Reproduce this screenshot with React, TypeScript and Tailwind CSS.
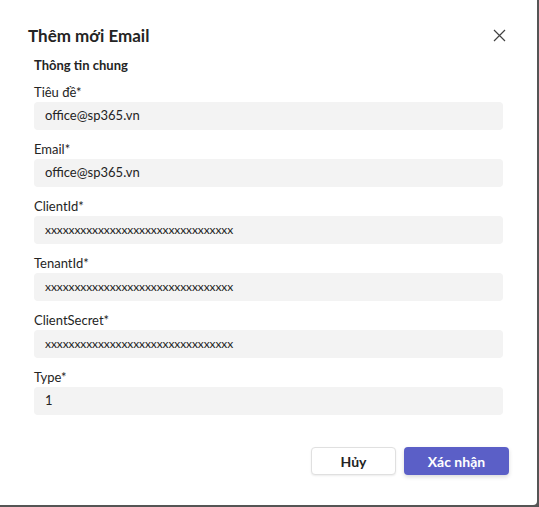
import React from "react";

const fields = [
  { label: "Tiêu đề*", value: "office@sp365.vn" },
  { label: "Email*", value: "office@sp365.vn" },
  { label: "ClientId*", value: "xxxxxxxxxxxxxxxxxxxxxxxxxxxxxxxx", small: true },
  { label: "TenantId*", value: "xxxxxxxxxxxxxxxxxxxxxxxxxxxxxxxx", small: true },
  { label: "ClientSecret*", value: "xxxxxxxxxxxxxxxxxxxxxxxxxxxxxxxx", small: true },
  { label: "Type*", value: "1" },
];

export default function App() {
  return (
    <div
      className="w-[539px] h-[507px] bg-[#555555]"
      style={{ fontFamily: '"Segoe UI", Lato, "Noto Sans", sans-serif' }}
    >
      <div className="w-[537px] h-[505px] bg-white rounded-br-[4px] flex flex-col">
        <div className="flex items-center justify-between pl-[28px] pr-[31px] pt-[24px] h-[47px]">
          <h1 className="text-[17px] font-bold text-[#242424] leading-[22px]">Thêm mới Email</h1>
          <svg width="13" height="13" viewBox="0 0 13 13" className="-mt-[1px]">
            <path d="M1 1 L12 12 M12 1 L1 12" stroke="#424242" strokeWidth="1.2" />
          </svg>
        </div>
        <div className="pl-[34px] pr-[34px] flex flex-col">
          <div className="text-[13px] font-bold text-[#242424] leading-[18px] mt-[9px]">Thông tin chung</div>
          <div className="flex flex-col gap-[9px] mt-[8px]">
            {fields.map((f) => (
              <div key={f.label} className="flex flex-col">
                <div className="text-[13px] text-[#242424] leading-[20px] h-[20px]">{f.label}</div>
                <div className="h-[28px] bg-[#f3f3f3] rounded-[4px] flex items-center px-[11px]">
                  <span className={f.small ? "text-[12px] text-[#242424] tracking-[-0.1px]" : "text-[13px] text-[#242424]"}>
                    {f.value}
                  </span>
                </div>
              </div>
            ))}
          </div>
        </div>
        <div className="flex justify-end gap-[8px] pr-[28px] mt-[32px]">
          <button className="w-[85px] h-[28px] rounded-[4px] border border-[#e0e0e0] bg-white text-[14px] font-bold text-[#242424] shadow-[0_1px_2px_rgba(0,0,0,0.08)]">
            Hủy
          </button>
          <button className="w-[105px] h-[28px] rounded-[4px] bg-[#5b5fc7] text-[14px] font-bold text-white shadow-[0_2px_4px_rgba(0,0,0,0.15)]">
            Xác nhận
          </button>
        </div>
      </div>
    </div>
  );
}
